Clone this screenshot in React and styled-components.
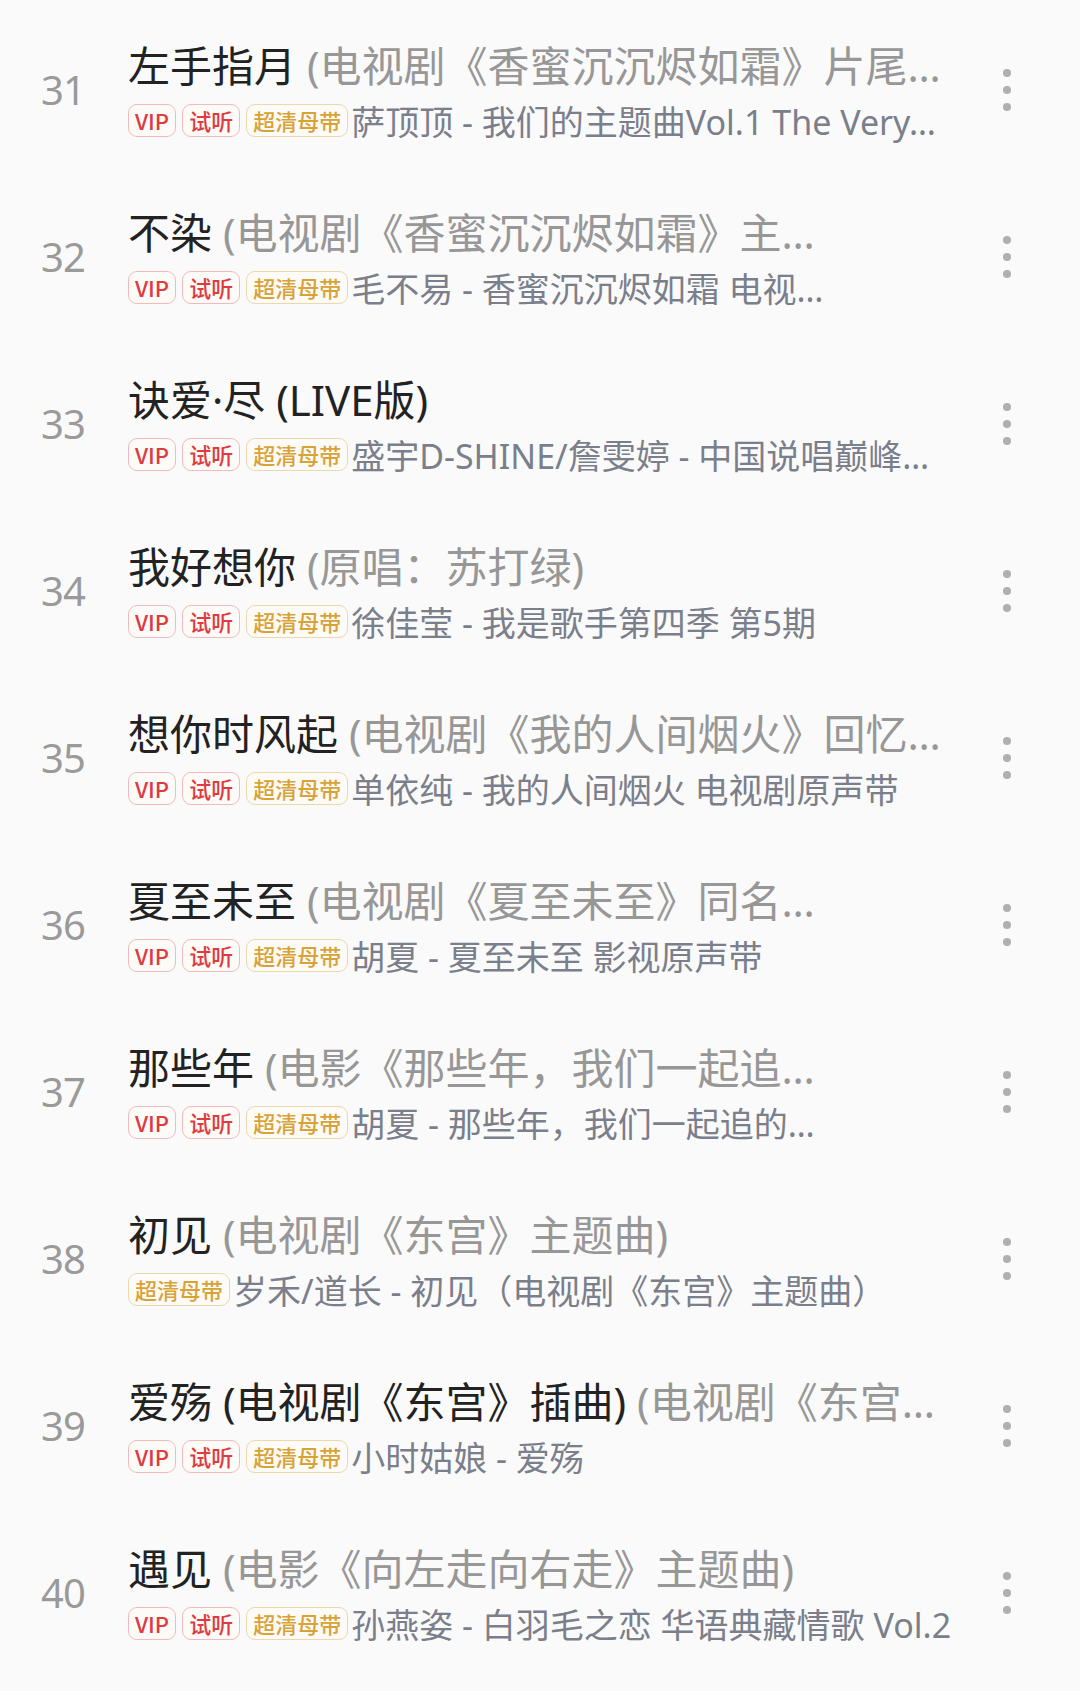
import React from "react";
import styled, { createGlobalStyle } from "styled-components";

const GlobalStyle = createGlobalStyle`
  html, body {
    margin: 0;
    padding: 0;
    background: #fafafa;
  }
  body {
    font-family: "Noto Sans", "Noto Sans CJK SC", sans-serif;
  }
`;

const songs = [
  {
    no: 31,
    name: "左手指月",
    extra: " (电视剧《香蜜沉沉烬如霜》片尾…",
    tags: ["vip", "try", "hq"],
    desc: "萨顶顶 - 我们的主题曲Vol.1 The Very…",
  },
  {
    no: 32,
    name: "不染",
    extra: " (电视剧《香蜜沉沉烬如霜》主…",
    tags: ["vip", "try", "hq"],
    desc: "毛不易 - 香蜜沉沉烬如霜 电视…",
  },
  {
    no: 33,
    name: "诀爱·尽 (LIVE版)",
    extra: "",
    tags: ["vip", "try", "hq"],
    desc: "盛宇D-SHINE/詹雯婷 - 中国说唱巅峰…",
  },
  {
    no: 34,
    name: "我好想你",
    extra: " (原唱：苏打绿)",
    tags: ["vip", "try", "hq"],
    desc: "徐佳莹 - 我是歌手第四季 第5期",
  },
  {
    no: 35,
    name: "想你时风起",
    extra: " (电视剧《我的人间烟火》回忆…",
    tags: ["vip", "try", "hq"],
    desc: "单依纯 - 我的人间烟火 电视剧原声带",
  },
  {
    no: 36,
    name: "夏至未至",
    extra: " (电视剧《夏至未至》同名…",
    tags: ["vip", "try", "hq"],
    desc: "胡夏 - 夏至未至 影视原声带",
  },
  {
    no: 37,
    name: "那些年",
    extra: " (电影《那些年，我们一起追…",
    tags: ["vip", "try", "hq"],
    desc: "胡夏 - 那些年，我们一起追的…",
  },
  {
    no: 38,
    name: "初见",
    extra: " (电视剧《东宫》主题曲)",
    tags: ["hq"],
    desc: "岁禾/道长 - 初见（电视剧《东宫》主题曲）",
  },
  {
    no: 39,
    name: "爱殇 (电视剧《东宫》插曲)",
    extra: " (电视剧《东宫…",
    tags: ["vip", "try", "hq"],
    desc: "小时姑娘 - 爱殇",
  },
  {
    no: 40,
    name: "遇见",
    extra: " (电影《向左走向右走》主题曲)",
    tags: ["vip", "try", "hq"],
    desc: "孙燕姿 - 白羽毛之恋 华语典藏情歌 Vol.2",
  },
];

const tagText = { vip: "VIP", try: "试听", hq: "超清母带" };

const List = styled.div`
  padding-top: 6px;
  background: #fafafa;
`;

const Row = styled.div`
  display: flex;
  align-items: center;
  height: 167px;
`;

const Index = styled.div`
  width: 86px;
  padding-left: 41px;
  box-sizing: border-box;
  flex-shrink: 0;
  font-size: 40px;
  letter-spacing: -1px;
  color: #9a9a9a;
  line-height: 1;
`;

const Body = styled.div`
  flex: 1;
  min-width: 0;
  display: flex;
  flex-direction: column;
  gap: 13px;
  padding-left: 42px;
`;

const Title = styled.div`
  font-size: 42px;
  line-height: 48px;
  color: #222222;
  white-space: nowrap;
`;

const Extra = styled.span`
  color: #979797;
`;

const Sub = styled.div`
  display: flex;
  align-items: center;
  gap: 6px;
  height: 34px;
  white-space: nowrap;
`;

const Tag = styled.span`
  display: inline-flex;
  align-items: center;
  justify-content: center;
  height: 33px;
  padding: 0 6px;
  box-sizing: border-box;
  border-radius: 9px;
  font-family: "Noto Sans CJK SC", sans-serif;
  font-size: 22px;
  font-weight: 500;
  border: 1.5px solid ${(p) => (p.$kind === "hq" ? "#ecd8ad" : "#f1babc")};
  color: ${(p) => (p.$kind === "hq" ? "#d9a236" : "#e03a41")};
  background: #fdfbf8;
`;

const Desc = styled.span`
  margin-left: -3px;
  font-size: 34px;
  color: #7a7f8b;
`;

const More = styled.div`
  flex-shrink: 0;
  display: flex;
  flex-direction: column;
  gap: 9px;
  margin: 0 69px 0 30px;
  span {
    width: 8px;
    height: 8px;
    border-radius: 50%;
    background: #b0b0b0;
  }
`;

export default function App() {
  return (
    <>
      <GlobalStyle />
      <List>
        {songs.map((s) => (
          <Row key={s.no}>
            <Index>{s.no}</Index>
            <Body>
              <Title>
                {s.name}
                {s.extra && <Extra>{s.extra}</Extra>}
              </Title>
              <Sub>
                {s.tags.map((t) => (
                  <Tag key={t} $kind={t}>
                    {tagText[t]}
                  </Tag>
                ))}
                <Desc>{s.desc}</Desc>
              </Sub>
            </Body>
            <More>
              <span />
              <span />
              <span />
            </More>
          </Row>
        ))}
      </List>
    </>
  );
}
